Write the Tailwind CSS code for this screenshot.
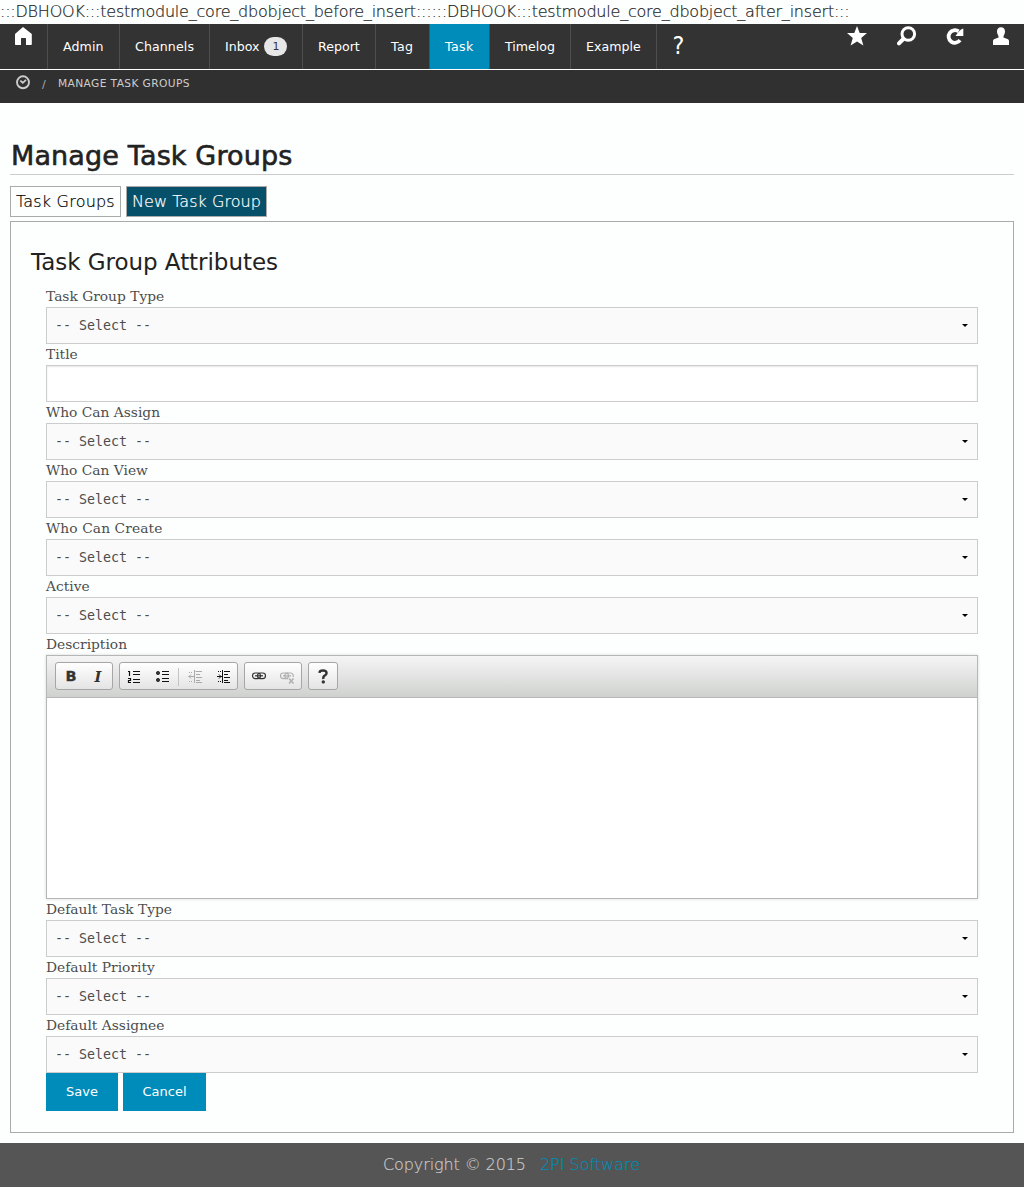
<!DOCTYPE html>
<html lang="en">
<head>
<meta charset="utf-8">
<title>Manage Task Groups</title>
<script src="https://cdn.jsdelivr.net/npm/@tailwindcss/browser@4"></script>
</head>
<body class="flex h-[1187px] w-[1024px] flex-col overflow-hidden bg-[#fdfffe] font-['DejaVu_Sans',sans-serif] text-[#222]">
<div class="h-6 shrink-0 text-base leading-6 font-extralight tracking-[-0.22px] whitespace-nowrap [-webkit-text-stroke:0.2px_#222]">:::DBHOOK:::testmodule_core_dbobject_before_insert::::::DBHOOK:::testmodule_core_dbobject_after_insert:::</div>
<nav class="flex h-[45px] shrink-0 bg-[#333] text-[12.6px] leading-[45px] text-white">
  <a class="w-12 border-r border-[#4e4e4e] pt-[3px] pl-[14px]"><svg width="18" height="18" viewBox="0 0 18 18" fill="#fff"><path d="M9 0 17.8 7V17.2Q17.8 18 17 18H12V11.5Q12 11 11.4 11H7.5Q7 11 7 11.5V18H1.8Q1 18 1 17.2V7Z"/></svg></a>
  <a class="w-[72px] border-r border-[#4e4e4e] pl-[15px] tracking-[0.1px]">Admin</a>
  <a class="w-[90px] border-r border-[#4e4e4e] pl-[15px] tracking-[0.1px]">Channels</a>
  <a class="flex w-[93px] items-center border-r border-[#4e4e4e] pl-[15px]">Inbox<span class="ml-[5px] h-[19px] w-[23px] rounded-full bg-[#e7e7e7] text-center text-[11px] leading-[20px] text-[#333]">1</span></a>
  <a class="w-[73px] border-r border-[#4e4e4e] pl-[15px]">Report</a>
  <a class="w-[54px] border-r border-[#4e4e4e] pl-[15px] tracking-[0.4px]">Tag</a>
  <a class="w-[60px] border-r border-[#4e4e4e] bg-[#008cba] pl-[15px] tracking-[0.4px]">Task</a>
  <a class="w-[81px] border-r border-[#4e4e4e] pl-[15px]">Timelog</a>
  <a class="w-[86px] border-r border-[#4e4e4e] pl-[15px]">Example</a>
  <a class="pl-[15px] text-[24px] leading-[45px]"><span class="inline-block scale-x-[.93]">?</span></a>
  <div class="ml-auto flex gap-[29px] pt-[2px] pr-[15px]">
    <svg width="21" height="20" viewBox="0 0 20 20" fill="#fff"><path d="M9.5 0 12.2 7H19.5L13.7 12 15.9 19.5 9.5 15.4 3.1 19.5 5.3 12-.5 7H6.8Z"/></svg>
    <svg width="20" height="20" viewBox="0 0 20 20" fill="none" stroke="#fff"><circle cx="11.3" cy="8" r="6.3" stroke-width="3"/><path d="M6.3 13 2 17.3" stroke-width="4" stroke-linecap="round"/></svg>
    <svg width="18" height="20" viewBox="0 0 18 20"><path d="M12.6 5.4A6.3 6.3 0 1 0 14 14.2" fill="none" stroke="#fff" stroke-width="3.8"/><path d="M17.3 2.5V10H9.5L12 6.5 15 3.6Z" fill="#fff"/></svg>
    <svg width="16" height="20" viewBox="0 0 16 20" fill="#fff"><path d="M8 1.2C10.6 1.2 12 3 12 5.5 12 7.5 11.2 8.6 10.5 10V11.5L15 13.2Q16 13.7 16 15V19H0V15Q0 13.7 1 13.2L5.5 11.5V10C4.8 8.6 4 7.5 4 5.5 4 3 5.4 1.2 8 1.2Z"/></svg>
  </div>
</nav>
<div class="mt-px flex h-[33px] shrink-0 bg-[#303030] pt-[5px] pl-4 text-[11px] leading-[17px] text-[#ccc]">
  <svg width="14" height="15" viewBox="0 0 14 15" fill="none" stroke="#ccc"><circle cx="7" cy="7.3" r="6" stroke-width="1.9"/><path d="M4.3 5.6 6.8 7.8 10 4.8" stroke-width="1.8"/></svg>
  <span class="ml-3 w-4 pt-px text-[#aaa]">/</span><span class="text-[10.7px] tracking-[0.36px]">MANAGE TASK GROUPS</span>
</div>
<main class="flex flex-col px-[10px]">
  <h1 class="mt-9 h-9 border-b border-[#ccc] pl-px text-[27px] leading-[34px] font-normal tracking-[0.14px] whitespace-nowrap [-webkit-text-stroke:0.6px_#222]">Manage Task Groups</h1>
  <div class="mt-[11px] flex gap-[5px] text-base leading-[29px] font-extralight whitespace-nowrap">
    <a class="h-[31px] w-[111px] border border-[#aaa] pl-[5px] tracking-[0.2px] text-black [-webkit-text-stroke:0.2px_#000]">Task Groups</a>
    <a class="h-[31px] w-[141px] border border-[#aaa] bg-[#075069] pl-[5px] tracking-[0.05px] text-white [-webkit-text-stroke:0.2px_#fff]">New Task Group</a>
  </div>
  <section class="mt-1 h-[912px] border border-[#aaa] px-[35px]">
    <h2 class="mt-[22px] -ml-[15px] h-[41px] text-[23px] leading-[36px] tracking-[-0.04px]">Task Group Attributes</h2>
    <form class="flex flex-col font-['DejaVu_Serif',serif] text-[13.8px] tracking-[0px] text-[#4d4d4d]">
      <label class="h-[22px] leading-[23px]">Task Group Type</label>
      <div class="flex h-[37px] items-center justify-between border border-[#ccc] bg-[#fafafa] pr-[9px] pl-2 font-['DejaVu_Sans_Mono',monospace] text-[13.3px] tracking-normal">-- Select --<svg width="6" height="3" viewBox="0 0 6 3"><path d="M0 0H6L3 3Z"/></svg></div>
      <label class="h-[21px] leading-[21px]">Title</label>
      <div class="h-[37px] border border-[#ccc] bg-white inset-shadow-[0_1px_2px_#0000001a]"></div>
      <label class="h-[21px] leading-[21px]">Who Can Assign</label>
      <div class="flex h-[37px] items-center justify-between border border-[#ccc] bg-[#fafafa] pr-[9px] pl-2 font-['DejaVu_Sans_Mono',monospace] text-[13.3px] tracking-normal">-- Select --<svg width="6" height="3" viewBox="0 0 6 3"><path d="M0 0H6L3 3Z"/></svg></div>
      <label class="h-[21px] leading-[21px]">Who Can View</label>
      <div class="flex h-[37px] items-center justify-between border border-[#ccc] bg-[#fafafa] pr-[9px] pl-2 font-['DejaVu_Sans_Mono',monospace] text-[13.3px] tracking-normal">-- Select --<svg width="6" height="3" viewBox="0 0 6 3"><path d="M0 0H6L3 3Z"/></svg></div>
      <label class="h-[21px] leading-[21px] tracking-[0.1px]">Who Can Create</label>
      <div class="flex h-[37px] items-center justify-between border border-[#ccc] bg-[#fafafa] pr-[9px] pl-2 font-['DejaVu_Sans_Mono',monospace] text-[13.3px] tracking-normal">-- Select --<svg width="6" height="3" viewBox="0 0 6 3"><path d="M0 0H6L3 3Z"/></svg></div>
      <label class="h-[21px] leading-[21px]">Active</label>
      <div class="flex h-[37px] items-center justify-between border border-[#ccc] bg-[#fafafa] pr-[9px] pl-2 font-['DejaVu_Sans_Mono',monospace] text-[13.3px] tracking-normal">-- Select --<svg width="6" height="3" viewBox="0 0 6 3"><path d="M0 0H6L3 3Z"/></svg></div>
      <label class="h-[21px] leading-[21px]">Description</label>
      <div class="flex h-[244px] flex-col border border-[#b6b6b6] bg-white shadow-[0_0_3px_#00000026]">
        <div class="flex h-[42px] gap-[6px] border-b border-[#b6b6b6] bg-linear-to-b from-[#f5f5f5] to-[#cfd1cf] pt-[6px] pl-2">
          <div class="flex h-7 w-[58px] rounded-[3px] border border-[#a6a6a6] bg-linear-to-b from-white to-[#e4e4e4]"><b class="w-7 pl-[2px] text-center font-['DejaVu_Sans',sans-serif] text-[14.5px] leading-[27px] tracking-normal text-[#333] [-webkit-text-stroke:0.3px_#333]">B</b><b class="w-7 text-center font-['DejaVu_Serif',serif] text-[14.5px] leading-[27px] tracking-normal text-[#333] italic">I</b></div>
          <div class="flex h-7 w-[119px] rounded-[3px] border border-[#a6a6a6] bg-linear-to-b from-white to-[#e4e4e4]"><svg width="117" height="26" viewBox="0 0 117 26" fill="none" stroke="#111"><path d="M13 8.5H20M13 11.5H20M13 16.5H20M13 19.5H20M42 8.5H49M42 11.5H49M42 15.5H49M42 18.5H49" stroke-width="1.2"/><path d="M8 8.5H9.5V13M8 15.5H10.5V17.5H8.5V19.5H11" stroke-width="1.2"/><circle cx="38" cy="10" r="1.6" fill="#333" stroke="#333"/><circle cx="38" cy="17" r="1.6" fill="#333" stroke="#333"/><path d="M58.5 5V23" stroke="#c4c4c4"/><g stroke="#aaa"><path d="M75.5 8.5H82M76 11.5H80M76 14.5H82M76 17.5H80M76 19.5H82M74.5 7V20M68.5 13.5H74M71 11.5 69 13.5 71 15.5"/><path d="M69 9.5H73M69 18.5H73" stroke-dasharray="1 1"/></g><path d="M104 8.5H110M104 11.5H108M104 14.5H110M104 17.5H108M104 19.5H110M102.5 7V20M97 13.5H102M99 11.5 101 13.5 99 15.5"/><path d="M98 8.5H101M98 18.5H101" stroke-dasharray="1 1"/></svg></div>
          <div class="flex h-7 w-[58px] rounded-[3px] border border-[#a6a6a6] bg-linear-to-b from-white to-[#e4e4e4]"><svg width="56" height="26" viewBox="0 0 56 26" fill="none" stroke="#333" stroke-width="1.2"><rect x="7.5" y="10" width="8" height="5.6" rx="2.8"/><rect x="12.5" y="10" width="8" height="5.6" rx="2.8"/><path d="M10 12.8H18"/><g stroke="#b0b0b0"><path d="M43 15.6H38.3A2.8 2.8 0 0 1 38.3 10H40.7A2.8 2.8 0 0 1 40.7 15.6M42 15.6A2.8 2.8 0 0 1 43.3 10H45.7A2.8 2.8 0 0 1 48 14M38 12.8H46"/><path d="M44 15.5 48.5 20.5M48.5 15.5 44 20.5" stroke-width="1.6"/></g></svg></div>
          <div class="flex h-7 w-[30px] rounded-[3px] border border-[#a6a6a6] bg-linear-to-b from-white to-[#e4e4e4]"><svg width="28" height="26" viewBox="0 0 28 26"><path d="M10.4 9.8Q10.6 7.5 14 7.5T17.6 10Q17.6 11.5 15.8 12.5T14.3 16" fill="none" stroke="#333" stroke-width="2.4"/><circle cx="14.3" cy="18.9" r="1.7" fill="#333"/></svg></div>
        </div>
      </div>
      <label class="h-[21px] leading-[21px]">Default Task Type</label>
      <div class="flex h-[37px] items-center justify-between border border-[#ccc] bg-[#fafafa] pr-[9px] pl-2 font-['DejaVu_Sans_Mono',monospace] text-[13.3px] tracking-normal">-- Select --<svg width="6" height="3" viewBox="0 0 6 3"><path d="M0 0H6L3 3Z"/></svg></div>
      <label class="h-[21px] leading-[21px]">Default Priority</label>
      <div class="flex h-[37px] items-center justify-between border border-[#ccc] bg-[#fafafa] pr-[9px] pl-2 font-['DejaVu_Sans_Mono',monospace] text-[13.3px] tracking-normal">-- Select --<svg width="6" height="3" viewBox="0 0 6 3"><path d="M0 0H6L3 3Z"/></svg></div>
      <label class="h-[21px] leading-[21px]">Default Assignee</label>
      <div class="flex h-[37px] items-center justify-between border border-[#ccc] bg-[#fafafa] pr-[9px] pl-2 font-['DejaVu_Sans_Mono',monospace] text-[13.3px] tracking-normal">-- Select --<svg width="6" height="3" viewBox="0 0 6 3"><path d="M0 0H6L3 3Z"/></svg></div>
      <div class="flex gap-[5px] font-['DejaVu_Sans',sans-serif] text-[13px] tracking-normal text-white">
        <button type="button" class="h-[38px] w-[72px] bg-[#008cba]">Save</button>
        <button type="button" class="h-[38px] w-[83px] bg-[#008cba]">Cancel</button>
      </div>
    </form>
  </section>
</main>
<footer class="mt-[10px] h-11 shrink-0 bg-[#555] pl-[383px] text-base leading-[43px] font-extralight tracking-[-0.1px] text-[#ccc] [-webkit-text-stroke:0.15px_currentColor]">Copyright © 2015 <a class="ml-[9px] tracking-normal text-[#008cba]">2PI Software</a></footer>
</body>
</html>
